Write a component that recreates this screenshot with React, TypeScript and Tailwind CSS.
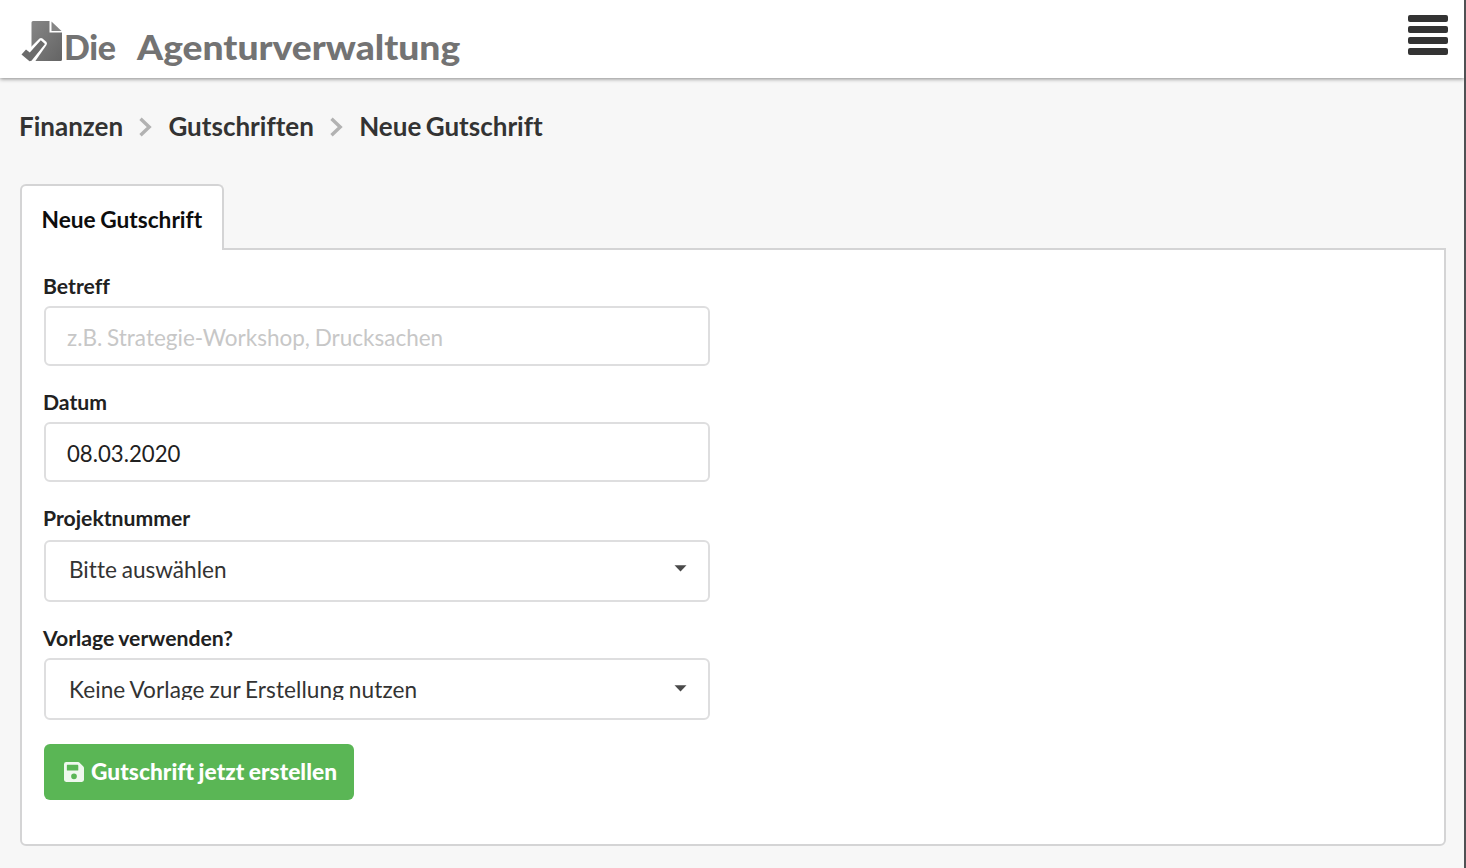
import type { ReactNode } from "react";

function Logo() {
  return (
    <div className="flex h-[78px] items-start pl-[20px]">
      <svg className="mt-[18px] shrink-0" width="44" height="47" viewBox="0 0 44 47">
        <defs>
          <linearGradient id="page" x1="0" y1="0" x2="1" y2="1">
            <stop offset="0" stopColor="#868686" />
            <stop offset="1" stopColor="#646464" />
          </linearGradient>
        </defs>
        <path d="M13 3H29.500V14.500H42V41.500Q42 43 40.500 43H11.500V4.500Q11.500 3 13 3Z" fill="url(#page)" />
        <path d="M31.500 3.500L41.500 13H31.500Z" fill="#858585" />
        <path d="M8 32L19.500 20.500Q21 19.300 22.500 20.500L26.500 24Q27.500 25.500 26.500 27L15 43.500H8Z" fill="#fff" />
        <path d="M1.500 36.500L6 31.500L9.800 34.500L20.800 22.300L25 26L11.500 42.800L9.500 43.200Z" fill="#6b6b6b" />
      </svg>
      <div className="mt-[27px] flex text-[34px] leading-[40px] font-black text-[#737373]">
        <span className="w-[73px] tracking-[-0.4px]">Die</span>
        <span className="origin-left scale-x-[1.095]">Agenturverwaltung</span>
      </div>
    </div>
  );
}

function Chevron() {
  return (
    <svg className="mx-[16.200px] mt-[2px] shrink-0" width="13" height="20" viewBox="0 0 13 20" fill="none" stroke="#b2b2b2" strokeWidth="3.400">
      <path d="M1.500 1.800L10.200 10L1.500 18.200" strokeLinejoin="miter" />
    </svg>
  );
}

function Label({ children }: { children: ReactNode }) {
  return <label className="ml-[-1px] block h-[32px] text-[21.200px] leading-[24px] font-bold [word-spacing:-0.8px] text-[#212121]">{children}</label>;
}

function Select({ value, low = false }: { value: string; low?: boolean }) {
  return (
    <div className={`flex h-[62px] w-[666px] items-start justify-between rounded-[6px] border-2 border-[#dededf] pr-[21px] pl-[23px] ${low ? "pt-[18px]" : "pt-[16px]"}`}>
      <div className={`text-[22.600px] leading-[24px] [word-spacing:-1px] text-[#333] ${low ? "h-[22px] overflow-hidden tracking-[0.070px]" : "h-[24px]"}`}>{value}</div>
      <svg className="mt-[7px]" width="13" height="7" viewBox="0 0 13 7">
        <path d="M0.500 0.200H12.500L6.500 6.500Z" fill="#4a4a4a" />
      </svg>
    </div>
  );
}

export default function App() {
  return (
    <div className="flex h-[868px] w-[1466px] overflow-hidden bg-[#f7f7f7] font-['Lato',sans-serif] [font-variant-ligatures:none]">
      <div className="flex w-[1464px] flex-col">
        <header className="flex h-[78px] shrink-0 justify-between bg-white shadow-[0_1px_4px_rgba(0,0,0,0.45)]">
          <Logo />
          <button aria-label="Menu" className="mt-[14.500px] mr-[16px] flex h-[41px] w-[40px] flex-col justify-between">
            <span className="h-[7.500px] w-full rounded-[2px] bg-[#333]" />
            <span className="h-[7.500px] w-full rounded-[2px] bg-[#333]" />
            <span className="h-[7.500px] w-full rounded-[2px] bg-[#333]" />
            <span className="h-[7.500px] w-full rounded-[2px] bg-[#333]" />
          </button>
        </header>
        <nav className="mt-[31px] ml-[19px] flex h-[34px] items-center text-[26px] leading-[34px] font-bold [word-spacing:-1.800px] text-[#333]">
          <span>Finanzen</span>
          <Chevron />
          <span>Gutschriften</span>
          <Chevron />
          <span>Neue Gutschrift</span>
        </nav>
        <main className="mt-[41px] ml-[20px] w-[1426px]">
          <div className="relative z-10 mb-[-2px] h-[66px] w-[204px] rounded-t-[6px] border-2 border-b-0 border-[#d4d4d5] bg-white pt-[20px] pl-[19.500px] text-[22.700px] leading-[28px] font-bold [word-spacing:-1px] whitespace-nowrap text-[#0d0d0d]">
            Neue Gutschrift
          </div>
          <form className="h-[598px] rounded-b-[6px] border-2 border-[#d4d4d5] bg-white pt-[24px] pl-[22px]">
            <Label>Betreff</Label>
            <input
              placeholder="z.B. Strategie-Workshop, Drucksachen"
              className="block h-[60px] w-[666px] rounded-[6px] border-2 border-[#dededf] px-[21px] pt-[2px] text-[22.500px] [word-spacing:-1px] text-[#212121] placeholder:text-[#c7c7c7]"
            />
            <div className="h-[24px]" />
            <Label>Datum</Label>
            <input
              defaultValue="08.03.2020"
              className="block h-[60px] w-[666px] rounded-[6px] border-2 border-[#dededf] px-[21px] pt-[2px] text-[22.200px] text-[#212121]"
            />
            <div className="h-[24px]" />
            <Label>Projektnummer</Label>
            <div className="h-[2px]" />
            <Select value="Bitte auswählen" />
            <div className="h-[24px]" />
            <Label>Vorlage verwenden?</Label>
            <Select value="Keine Vorlage zur Erstellung nutzen" low />
            <button
              type="button"
              className="mt-[24px] flex h-[56px] w-[310px] items-center rounded-[6px] bg-[#5ab655] pl-[20px] text-[22.700px] leading-[28px] font-black tracking-[0.040px] [word-spacing:-1px] whitespace-nowrap text-white"
            >
              <svg className="mr-[7px] shrink-0" width="20" height="20" viewBox="0 0 448 448" fill="#fff" fillOpacity="0.9">
                <path d="M434 98L350 14A48 48 0 0 0 316 0H48A48 48 0 0 0 0 48V400A48 48 0 0 0 48 448H400A48 48 0 0 0 448 400V132A48 48 0 0 0 434 98ZM224 384A64 64 0 1 1 224 256A64 64 0 0 1 224 384ZM320 79.500V180A12 12 0 0 1 308 192H76A12 12 0 0 1 64 180V76A12 12 0 0 1 76 64H304.500A12 12 0 0 1 313 67.500L316.500 71A12 12 0 0 1 320 79.500Z" />
              </svg>
              Gutschrift jetzt erstellen
            </button>
          </form>
        </main>
      </div>
      <div className="w-[2px] bg-[#505154]" />
    </div>
  );
}
